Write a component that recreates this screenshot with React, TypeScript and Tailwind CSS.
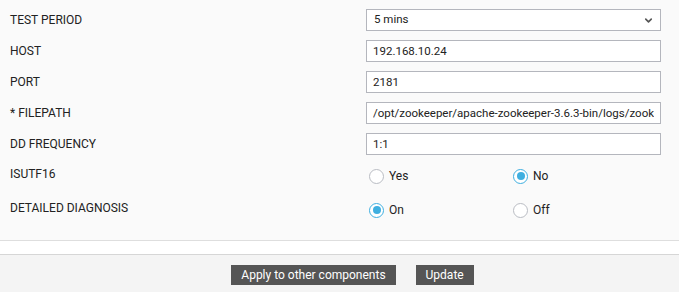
import { ChevronDown } from "lucide-react";

const font = { fontFamily: "Roboto, 'Liberation Sans', sans-serif" };

function TextRow({ label, value }: { label: string; value: string }) {
  return (
    <div className="flex h-[22px] items-center">
      <div className="w-[366px] pl-[10px] text-[12px] text-[#222]">{label}</div>
      <input
        readOnly
        value={value}
        className="h-[22px] w-[295px] border border-[#b4b6bd] bg-white px-[6px] text-[11.5px] text-[#222] outline-none"
      />
    </div>
  );
}

function Radio({ label, checked }: { label: string; checked?: boolean }) {
  return (
    <div className="flex items-center gap-[5px]">
      <span
        className={`flex h-[15px] w-[15px] items-center justify-center rounded-full border bg-white ${
          checked ? "border-[#3fafe0]" : "border-[#b9bcc3]"
        }`}
      >
        {checked && <span className="h-[8px] w-[8px] rounded-full bg-[#3fafe0]" />}
      </span>
      <span className="text-[12px] text-[#222]">{label}</span>
    </div>
  );
}

function RadioRow({ label, a, b, first }: { label: string; a: string; b: string; first: boolean }) {
  return (
    <div className="flex h-[16px] items-center">
      <div className="mb-[4px] w-[369px] pl-[10px] text-[12px] text-[#222]">{label}</div>
      <div className="w-[144px]">
        <Radio label={a} checked={first} />
      </div>
      <Radio label={b} checked={!first} />
    </div>
  );
}

export default function App() {
  return (
    <div className="h-[293px] w-[679px] bg-white" style={font}>
      <div className="flex flex-col gap-[9px] border-b border-[#dedede] bg-[#fafafa] pt-[9px]">
        <div className="flex h-[22px] items-center">
          <div className="w-[366px] pl-[10px] text-[12px] text-[#222]">TEST PERIOD</div>
          <div className="flex h-[22px] w-[295px] items-center justify-between border border-[#b4b6bd] bg-white pl-[7px] pr-[6px] text-[11.5px] text-[#222]">
            <span>5 mins</span>
            <ChevronDown size={11} strokeWidth={3.5} className="text-[#555]" />
          </div>
        </div>
        <TextRow label="HOST" value="192.168.10.24" />
        <TextRow label="PORT" value="2181" />
        <TextRow label="* FILEPATH" value="/opt/zookeeper/apache-zookeeper-3.6.3-bin/logs/zookeeper.log" />
        <TextRow label="DD FREQUENCY" value="1:1" />
        <div className="mt-[4px] flex flex-col gap-[18px] pb-[22px]">
          <RadioRow label="ISUTF16" a="Yes" b="No" first={false} />
          <RadioRow label="DETAILED DIAGNOSIS" a="On" b="Off" first={true} />
        </div>
      </div>
      <div className="h-[14px] border-b border-[#d6d6d6] bg-white" />
      <div className="flex h-[37px] justify-center gap-[20px] bg-[#f4f4f4] pl-[26px] pt-[10px]">
        <button className="h-[20px] bg-[#555] px-[10px] text-[12px] text-white">Apply to other components</button>
        <button className="h-[20px] bg-[#555] px-[10px] text-[12px] text-white">Update</button>
      </div>
    </div>
  );
}
